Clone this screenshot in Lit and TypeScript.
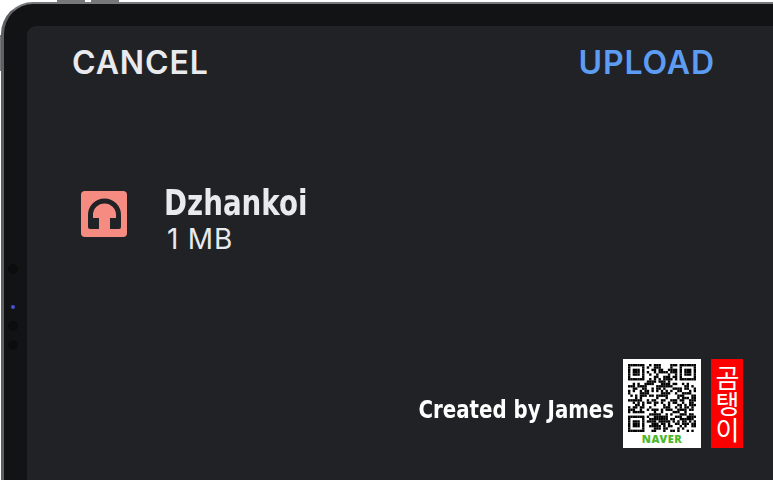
import { LitElement, html, css, svg } from "lit";
import { customElement } from "lit/decorators.js";

const N = 29;
function qrCells(): [number, number][] {
  const cells: [number, number][] = [];
  let seed = 7919;
  const rnd = () => {
    seed = (seed * 1103515245 + 12345) & 0x7fffffff;
    return (seed >> 12) % 100;
  };
  const inFinder = (x: number, y: number) =>
    (x < 8 && y < 8) || (x >= N - 8 && y < 8) || (x < 8 && y >= N - 8);
  const finder = (x: number, y: number) => {
    const fx = x >= N - 8 ? x - (N - 7) : x;
    const fy = y >= N - 8 ? y - (N - 7) : y;
    if (fx < 0 || fy < 0 || fx > 6 || fy > 6) return false;
    if (fx === 0 || fx === 6 || fy === 0 || fy === 6) return true;
    return fx >= 2 && fx <= 4 && fy >= 2 && fy <= 4;
  };
  for (let y = 0; y < N; y++) {
    for (let x = 0; x < N; x++) {
      const on = inFinder(x, y) ? finder(x, y) : rnd() < 52;
      if (on) cells.push([x, y]);
    }
  }
  return cells;
}
const CELLS = qrCells();

@customElement("app-root")
export class AppRoot extends LitElement {
  static styles = css`
    :host {
      display: block;
      width: 773px;
      height: 480px;
      background: #fff;
      overflow: hidden;
    }
    .stage {
      position: relative;
      height: 480px;
      padding: 2px 0 0 1px;
      box-sizing: border-box;
    }
    .btn-top {
      position: absolute;
      top: 0;
      width: 28px;
      height: 3px;
      background: #77787a;
    }
    .btn-top.a { left: 57px; }
    .btn-top.b { left: 91px; }
    .btn-left {
      position: absolute;
      left: 0;
      top: 35px;
      width: 3px;
      height: 36px;
      background: #77787a;
    }
    .device {
      position: relative;
      height: 100%;
      box-sizing: border-box;
      background: #121314;
      border-radius: 32px 0 0 0;
      border-top: 2px solid #77787a;
      border-left: 3px solid #5f6063;
      padding: 22px 0 0 23px;
    }
    .cam {
      position: absolute;
      left: 4px;
      width: 10px;
      height: 10px;
      border-radius: 50%;
      background: #0d0d0e;
    }
    .cam.c1 { top: 260px; }
    .cam.c2 { top: 317px; }
    .cam.c3 { top: 336px; }
    .led {
      position: absolute;
      left: 7px;
      top: 301px;
      width: 4px;
      height: 4px;
      border-radius: 50%;
      background: #4a50d0;
    }
    .screen {
      box-sizing: border-box;
      height: 100%;
      background: #212226;
      border-radius: 9px 0 0 0;
      padding: 15px 58px 32px 45px;
      display: flex;
      flex-direction: column;
    }
    .head {
      display: flex;
      justify-content: space-between;
      font: 600 32px/44px Inter, sans-serif;
      letter-spacing: 0.9px;
      color: #e9eaee;
    }
    .upload { color: #5d9cf3; }
    .row {
      display: flex;
      align-items: flex-start;
      margin-top: 106px;
      margin-left: 9px;
      gap: 37px;
    }
    .tile {
      width: 46px;
      height: 46px;
      border-radius: 4px;
      background: #f68b82;
      display: flex;
      align-items: center;
      justify-content: center;
    }
    .tile svg { width: 34px; height: 34px; display: block; }
    .text { margin-top: -7px; }
    .name {
      font: 700 36px/38px "DejaVu Sans", sans-serif;
      color: #e9eaee;
      transform: scaleX(0.77);
      transform-origin: left center;
      white-space: nowrap;
    }
    .size {
      margin: 1px 0 0 3px;
      font: 400 28px/32px Inter, sans-serif;
      letter-spacing: 0.8px;
      color: #e9eaee;
    }
    .credit {
      margin-top: auto;
      margin-right: -28px;
      display: flex;
      justify-content: flex-end;
      align-items: center;
      gap: 10px;
    }
    .by {
      padding-top: 12px;
      margin-right: -1px;
      font: 700 24px/26px "DejaVu Sans", sans-serif;
      color: #fff;
      transform: scaleX(0.825);
      transform-origin: right center;
      white-space: nowrap;
    }
    .qr {
      box-sizing: border-box;
      width: 78px;
      height: 89px;
      background: #fff;
      padding: 5px 5px 0;
      display: flex;
      flex-direction: column;
      align-items: center;
    }
    .qr svg { width: 68px; height: 68px; display: block; filter: blur(0.4px); }
    .naver {
      font: 900 11px/14px "Noto Sans", sans-serif;
      color: #4cb82c;
      letter-spacing: 0.5px;
    }
    .stamp {
      box-sizing: border-box;
      width: 32px;
      height: 89px;
      background: #fa0000;
      color: #fff;
      display: flex;
      align-items: center;
      justify-content: center;
    }
    .stamp span {
      writing-mode: vertical-rl;
      text-orientation: upright;
      font: 400 26px/32px "Noto Sans CJK KR", sans-serif;
    }
  `;

  render() {
    return html`
      <div class="stage">
        <div class="btn-top a"></div>
        <div class="btn-top b"></div>
        <div class="btn-left"></div>
        <div class="device">
          <span class="cam c1"></span>
          <span class="cam c2"></span>
          <span class="cam c3"></span>
          <span class="led"></span>
          <div class="screen">
            <div class="head"><span>CANCEL</span><span class="upload">UPLOAD</span></div>
            <div class="row">
              <div class="tile">
                <svg viewBox="0 0 34 34" fill="none">
                  <path d="M3.500 24V18a14 14 0 0 1 28 0V24" stroke="#212226" stroke-width="5" />
                  <path d="M1 21h11v11H3a2 2 0 0 1-2-2zM23 21H34v9a2 2 0 0 1-2 2h-9z" fill="#212226" />
                </svg>
              </div>
              <div class="text">
                <div class="name">Dzhankoi</div>
                <div class="size">1 MB</div>
              </div>
            </div>
            <div class="credit">
              <span class="by">Created by James</span>
              <div class="qr">
                <svg viewBox="0 0 ${N} ${N}">
                  ${CELLS.map(([x, y]) => svg`<rect x=${x} y=${y} width="1.02" height="1.02" fill="#000" />`)}
                </svg>
                <span class="naver">NAVER</span>
              </div>
              <div class="stamp"><span>곰탱이</span></div>
            </div>
          </div>
        </div>
      </div>
    `;
  }
}
